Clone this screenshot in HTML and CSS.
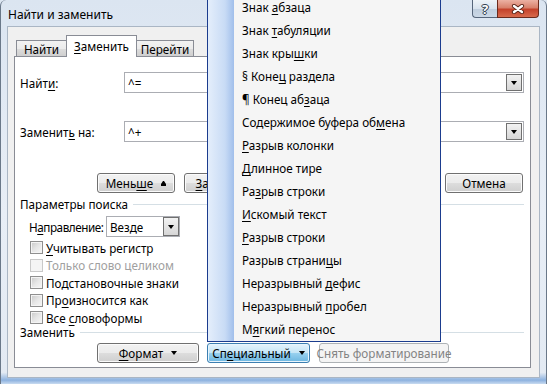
FILE: index.html
```html
<!DOCTYPE html>
<html lang="ru">
<head>
  <meta charset="UTF-8">
  <title>Найти и заменить</title>
  <link rel="stylesheet" href="styles.css">
</head>
<body>

  <div class="window">
    <div class="titlebar">
      <span class="title">Найти и заменить</span>
      <div class="caption">
        <span class="cap help">?</span>
        <span class="cap close">
          <svg width="14" height="10" viewBox="0 0 14 10">
            <path d="M3 2 L11 8 M11 2 L3 8" stroke="#5a2418" stroke-width="4.2" stroke-linecap="round"/>
            <path d="M3 2 L11 8 M11 2 L3 8" stroke="#fff" stroke-width="2.4" stroke-linecap="round"/>
          </svg>
        </span>
      </div>
    </div>

    <div class="client">
      <div class="tabs">
        <div class="tab"><span><u>Н</u>айти</span></div>
        <div class="tab active"><span><u>З</u>аменить</span></div>
        <div class="tab"><span><u>П</u>ерейти</span></div>
      </div>

      <div class="panel">
        <div class="field">
          <span class="field-label">Найт<u>и</u>:</span>
          <div class="combo"><span>^=</span><span class="drop"></span></div>
        </div>
        <div class="field">
          <span class="field-label">Заменит<u>ь</u> на:</span>
          <div class="combo"><span>^+</span><span class="drop"></span></div>
        </div>

        <div class="buttons">
          <span class="btn"><span>Мень<u>ш</u>е</span><span class="less"></span></span>
          <span class="btn"><span><u>З</u>аменить</span></span>
          <span class="btn"><span>Заменить <u>в</u>се</span></span>
          <span class="btn"><span><u>Н</u>айти далее</span></span>
          <span class="btn"><span>Отмена</span></span>
        </div>

        <div class="group"><span>Параметры поиска</span></div>

        <div class="direction">
          <span class="direction-label">Н<u>а</u>правление:</span>
          <div class="select"><span>Везде</span><span class="drop"></span></div>
        </div>

        <div class="checks">
          <div class="check"><span class="box"></span><span><u>У</u>читывать регистр</span></div>
          <div class="check disabled"><span class="box"></span><span>Только слово целиком</span></div>
          <div class="check"><span class="box"></span><span>Подстановочные знаки</span></div>
          <div class="check"><span class="box"></span><span>Пр<u>о</u>износится как</span></div>
          <div class="check"><span class="box"></span><span>Все <u>с</u>ловоформы</span></div>
        </div>

        <div class="group"><span>Заменить</span></div>

        <div class="buttons bottom">
          <span class="btn wide"><span><u>Ф</u>ормат</span><span class="arrow"></span></span>
          <span class="btn wide hot"><span>Сп<u>е</u>циальный</span><span class="arrow"></span></span>
          <span class="btn long disabled"><span>Снять форматирование</span></span>
        </div>
      </div>
    </div>

    <div class="menu">
      <div class="item">Знак <u>а</u>бзаца</div>
      <div class="item">Знак <u>т</u>абуляции</div>
      <div class="item">Знак кры<u>ш</u>ки</div>
      <div class="item">§ Коне<u>ц</u> раздела</div>
      <div class="item">¶ Конец аб<u>з</u>аца</div>
      <div class="item">Содержимое буфера об<u>м</u>ена</div>
      <div class="item"><u>Р</u>азрыв колонки</div>
      <div class="item"><u>Д</u>линное тире</div>
      <div class="item">Ра<u>з</u>рыв строки</div>
      <div class="item"><u>И</u>скомый текст</div>
      <div class="item"><u>Р</u>азрыв строки</div>
      <div class="item">Разрыв страни<u>ц</u>ы</div>
      <div class="item">Неразрывный <u>д</u>ефис</div>
      <div class="item">Неразрывный <u>п</u>робел</div>
      <div class="item">М<u>я</u>гкий перенос</div>
    </div>
  </div>

</body>
</html>
```

FILE: styles.css
```css
* {
  box-sizing: border-box;
}

html, body {
  margin: 0;
  height: 100%;
  overflow: hidden;
}

body {
  font-family: "Noto Sans", "Open Sans", sans-serif;
  font-size: 11.7px;
  color: #000;
  background: #dce6f2;
}

u {
  text-decoration: underline;
  text-underline-offset: 2px;
}

.window {
  position: relative;
  width: 547px;
  height: 384px;
  display: flex;
  flex-direction: column;
  padding: 0 6px 6px 6px;
  border-left: 1px solid #6a7889;
  border-right: 1px solid #6a7889;
  border-radius: 6px 6px 0 0;
  background: linear-gradient(to bottom, #dbe5f1 0%, #e8eef6 55%, #e3eaf3 97%, #8db2df 99%, #c9dbf0 100%);
}

/* title bar */
.titlebar {
  display: flex;
  height: 26px;
  padding-left: 1px;
}

.title {
  font-size: 12px;
  line-height: 29px;
}

.caption {
  display: flex;
  margin-left: auto;
  margin-right: 1px;
  height: 18px;
}

.cap {
  display: flex;
  align-items: center;
  justify-content: center;
  height: 18px;
  border: 1px solid #56657a;
  border-top: none;
}

.help {
  width: 25px;
  border-right: none;
  border-radius: 0 0 0 4px;
  background: linear-gradient(to bottom, #eef3f8 0%, #d9e3ee 50%, #bfcddd 51%, #cbd8e6 100%);
  color: #fff;
  font-weight: bold;
  font-size: 13px;
  text-shadow: 0 0 1px #33404f, 1px 0 0 #33404f, -1px 0 0 #33404f, 0 1px 0 #33404f, 0 -1px 0 #33404f;
}

.close {
  width: 42px;
  border-color: #6b2a1c;
  border-radius: 0 0 4px 0;
  background: linear-gradient(to bottom, #ecb1a3 0%, #d8816c 45%, #c4422b 55%, #d86a4c 100%);
}

/* client area */
.client {
  flex: 1;
  display: flex;
  flex-direction: column;
  padding: 8px 8px 9px 6px;
  background: #f0f0f0;
  border: 1px solid #aab6c4;
}

.tabs {
  display: flex;
  align-items: flex-end;
  height: 21px;
  padding-left: 2px;
}

.tab {
  display: flex;
  align-items: center;
  justify-content: center;
  height: 16px;
  margin-right: -1px;
  border: 1px solid #898c95;
  border-bottom: none;
  background: linear-gradient(to bottom, #f2f2f2 0%, #ebebeb 50%, #dddddd 51%, #cfcfcf 100%);
}

.tab:nth-child(1) {
  width: 51px;
}

.tab:nth-child(3) {
  width: 58px;
}

.tab.active {
  position: relative;
  z-index: 1;
  width: 71px;
  height: 22px;
  margin-bottom: -1px;
  padding-bottom: 2px;
  background: #fff;
}

.panel {
  display: flex;
  flex-direction: column;
  height: 312px;
  padding: 0 6px 0 5px;
  border: 1px solid #898c95;
  background: #fff;
}

.field {
  display: flex;
  align-items: center;
  height: 21px;
  margin-top: 15px;
}

.field + .field {
  margin-top: 28px;
}

.field-label {
  width: 104px;
}

.combo, .select {
  display: flex;
  align-items: center;
  height: 21px;
  padding-left: 3px;
  border: 1px solid #abadb3;
  background: #fff;
}

.combo {
  flex: 1;
}

.drop {
  display: flex;
  align-items: center;
  justify-content: center;
  width: 16px;
  height: 17px;
  margin-left: auto;
  margin-right: 1px;
  border: 1px solid #707070;
  background: linear-gradient(to bottom, #f2f2f2 0%, #e4e4e4 50%, #d6d6d6 100%);
}

.drop::after, .arrow {
  content: "";
  display: inline-block;
  border-left: 3.5px solid transparent;
  border-right: 3.5px solid transparent;
  border-top: 4px solid #000;
}

.buttons {
  display: flex;
  gap: 9px;
  height: 20px;
  margin-top: 31px;
  padding-left: 77px;
}

.btn {
  display: flex;
  align-items: center;
  justify-content: center;
  gap: 8px;
  width: 78px;
  height: 20px;
  border: 1px solid #707070;
  border-radius: 3px;
  box-shadow: inset 0 0 0 1px #fbfbfb;
  background: linear-gradient(to bottom, #f2f2f2 0%, #ebebeb 50%, #dddddd 51%, #cfcfcf 100%);
  white-space: nowrap;
}

.less {
  width: 5px;
  height: 3px;
  border-left: 2.5px solid transparent;
  border-right: 2.5px solid transparent;
  border-bottom: 3px solid #000;
  box-shadow: 0 2px 0 0 #000;
  margin-top: -2px;
}

.group {
  display: flex;
  align-items: center;
  height: 14px;
  margin-top: 4px;
}

.group::after {
  content: "";
  flex: 1;
  margin-left: 5px;
  border-top: 1px solid #d5dfe5;
}

.direction {
  display: flex;
  align-items: center;
  height: 21px;
  margin: 5px 0 0 9px;
}

.direction-label {
  width: 77px;
  white-space: nowrap;
  letter-spacing: -0.45px;
}

.select {
  width: 74px;
}

.select .drop {
  height: 19px;
  margin-right: 0;
}

.checks {
  margin: 4px 0 0 10px;
}

.check {
  display: flex;
  align-items: center;
  gap: 3px;
  height: 13px;
  margin-bottom: 4.5px;
}

.check:last-child {
  margin-bottom: 0;
}

.box {
  width: 13px;
  height: 13px;
  border: 1px solid #8f8f8f;
  box-shadow: inset 0 0 0 1px #f4f4f4;
  background: linear-gradient(135deg, #c8c8c8 0%, #e6e6e6 50%, #f7f7f7 100%);
}

.check.disabled {
  color: #a0a0a0;
}

.check.disabled .box {
  border-color: #c9c9c9;
  background: #f4f4f4;
}

.checks + .group {
  margin-top: 1px;
}

.buttons.bottom {
  margin-top: 4px;
  gap: 0;
}

.btn.wide {
  width: 102px;
  margin-right: 8px;
}

.btn.hot {
  width: 103px;
  margin-right: 9px;
  border-color: #3c7fb1;
  box-shadow: inset 0 0 0 1px #e8f5fd;
  background: linear-gradient(to bottom, #e5f4fc 0%, #c4e5f6 50%, #98d1ef 51%, #6cb6e0 100%);
}

.btn.long {
  width: 130px;
}

.btn.disabled {
  color: #838383;
  border-color: #adb2b5;
  box-shadow: none;
  background: #f4f4f4;
}

/* popup menu */
.menu {
  position: absolute;
  left: 206px;
  top: -5px;
  width: 234px;
  border: 1px solid #1b3c8e;
  background: linear-gradient(to right, #e4eefb 0px, #c8dbf5 17px, #a1bfeb 26px, #f5f5f5 26px);
}

.item {
  height: 23px;
  line-height: 23px;
  padding-left: 34px;
  white-space: nowrap;
}
```
